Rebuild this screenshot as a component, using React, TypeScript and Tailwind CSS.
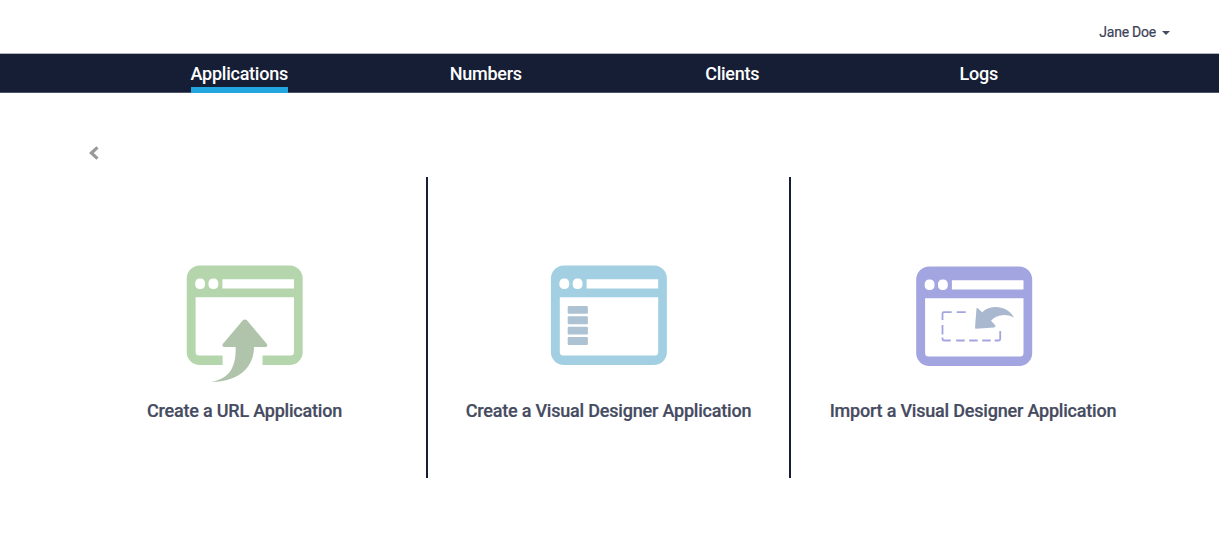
import React from "react";

const tabs = ["Applications", "Numbers", "Clients", "Logs"];

function WindowFrame({ color }: { color: string }) {
  return (
    <path
      fill={color}
      fillRule="evenodd"
      d="M13 0H103A13 13 0 0 1 116 13V86.500A13 13 0 0 1 103 99.500H13A13 13 0 0 1 0 86.500V13A13 13 0 0 1 13 0Z
         M12.800 13A4.300 4.300 0 0 0 8.500 17.300V19.200A4.300 4.300 0 0 0 12.800 23.500H14A4.300 4.300 0 0 0 18.300 19.200V17.300A4.300 4.300 0 0 0 14 13Z
         M26.100 13A4.300 4.300 0 0 0 21.800 17.300V19.200A4.300 4.300 0 0 0 26.100 23.500H27.300A4.300 4.300 0 0 0 31.600 19.200V17.300A4.300 4.300 0 0 0 27.300 13Z
         M35.700 13.700V23H107.300V13.700Z
         M8.900 31.800V86.500A3.500 3.500 0 0 0 12.400 90H103.800A3.500 3.500 0 0 0 107.300 86.500V31.800Z"
    />
  );
}

function UrlIcon() {
  return (
    <svg className="block" width="117" height="120" viewBox="-0.7 -0.5 117 120">
      <WindowFrame color="#b5d6ad" />
      <path fill="#fff" d="M35.900 84H75.800V101H35.900Z" />
      <path
        fill="#b0c3ab"
        d="M56.400 54.600Q58.200 53.200 60 54.600L80 78.200Q81.800 80.900 78.800 81.400H67.300C67.300 100 54 116.300 24.500 116.300C41 113.500 49.500 104 49 81.400H37.300Q34.500 80.600 36.300 78.200Z"
      />
    </svg>
  );
}

function DesignerIcon() {
  return (
    <svg className="block" width="117" height="120" viewBox="-0.9 -0.5 117 120">
      <WindowFrame color="#a2d0e2" />
      <g fill="#adc3d3">
        <rect x="16.800" y="40.400" width="20.200" height="7.900" rx="1.200" />
        <rect x="16.800" y="50.800" width="20.200" height="7.900" rx="1.200" />
        <rect x="16.800" y="61.200" width="20.200" height="7.900" rx="1.200" />
        <rect x="16.800" y="71.500" width="20.200" height="7.900" rx="1.200" />
      </g>
    </svg>
  );
}

function ImportIcon() {
  return (
    <svg className="block" width="120" height="120" viewBox="-3.2 -0.5 120 120">
      <WindowFrame color="#a3a5e1" />
      <g fill="none" stroke="#a3a5e1" strokeWidth="1.800">
        <path d="M26.300 53.500V47Q26.300 45.700 27.600 45.700H35.500M40.500 45.700H49.500M26.300 58.500V68M26.300 71V72.500Q26.300 74 27.800 74H34.500M40 74H48.500M53 74H61.500M66 74H74.500M78.500 74H82.500Q84 74 84 72.500V71.500M84 64.500V72" />
      </g>
      <path
        fill="#a9b8cf"
        d="M60.300 41.700Q61 41.300 61.800 42L66 45.700C75 37.500 91 39.200 97.800 51C89.500 46.500 80 48.200 74.800 54.300L78.600 58.200Q80.300 60.300 77.800 60.900L60 62.300Q58.700 62.400 58.800 61Z"
      />
    </svg>
  );
}

const options = [
  { label: "Create a URL Application", icon: <UrlIcon />, cls: "w-[365px] border-r-2 pt-[88px]", text: "" },
  { label: "Create a Visual Designer Application", icon: <DesignerIcon />, cls: "w-[363px] border-r-2 pt-[88px]", text: "" },
  { label: "Import a Visual Designer Application", icon: <ImportIcon />, cls: "w-[364px] pt-[89px]", text: "-mt-px" },
];

export default function App() {
  return (
    <div className="h-[540px] overflow-hidden bg-white font-['Roboto',sans-serif]">
      <header className="flex h-[53px] items-center justify-end pt-[11px] pr-[49px]">
        <button className="flex items-center gap-[6px] text-sm leading-5 tracking-[-0.24px] text-[#3c4258] [-webkit-text-stroke:0.2px_#3c4258]">
          Jane Doe
          <svg className="mt-px" width="8" height="4" viewBox="0 0 8 4">
            <path d="M0 0H8L4 4Z" fill="#454b60" />
          </svg>
        </button>
      </header>
      <nav className="flex h-10 border-t border-b border-t-[#b3b6bf] border-b-[#4d5468] bg-[#161e36] pr-[117px] pl-[116px]">
        {tabs.map((tab, i) => (
          <div key={tab} className="flex flex-1 justify-center">
            <a
              className={
                "-mb-px flex h-[39px] items-center border-b-[6px] pt-[7px] text-lg leading-6 font-medium tracking-[-0.24px] text-white " +
                (i === 0 ? "border-[#22a6df]" : "border-transparent")
              }
            >
              {tab}
            </a>
          </div>
        ))}
      </nav>
      <main>
        <div className="flex h-[84px] pt-[53px] pl-[89px]">
          <svg width="11" height="14" viewBox="0 0 11 14">
            <path d="M8.500 1.400L2.400 7L8.500 12.600" fill="none" stroke="#999" strokeWidth="3.200" />
          </svg>
        </div>
        <div className="flex pl-[63px]">
          {options.map((o) => (
            <section key={o.label} className={"flex h-[301px] flex-col items-center border-[#161e36] " + o.cls}>
              {o.icon}
              <h2 className={"pt-[14px] text-lg leading-6 font-medium tracking-[-0.2px] whitespace-nowrap text-[#454b60] [-webkit-text-stroke:0.2px_#454b60] " + o.text}>
                {o.label}
              </h2>
            </section>
          ))}
        </div>
      </main>
    </div>
  );
}
